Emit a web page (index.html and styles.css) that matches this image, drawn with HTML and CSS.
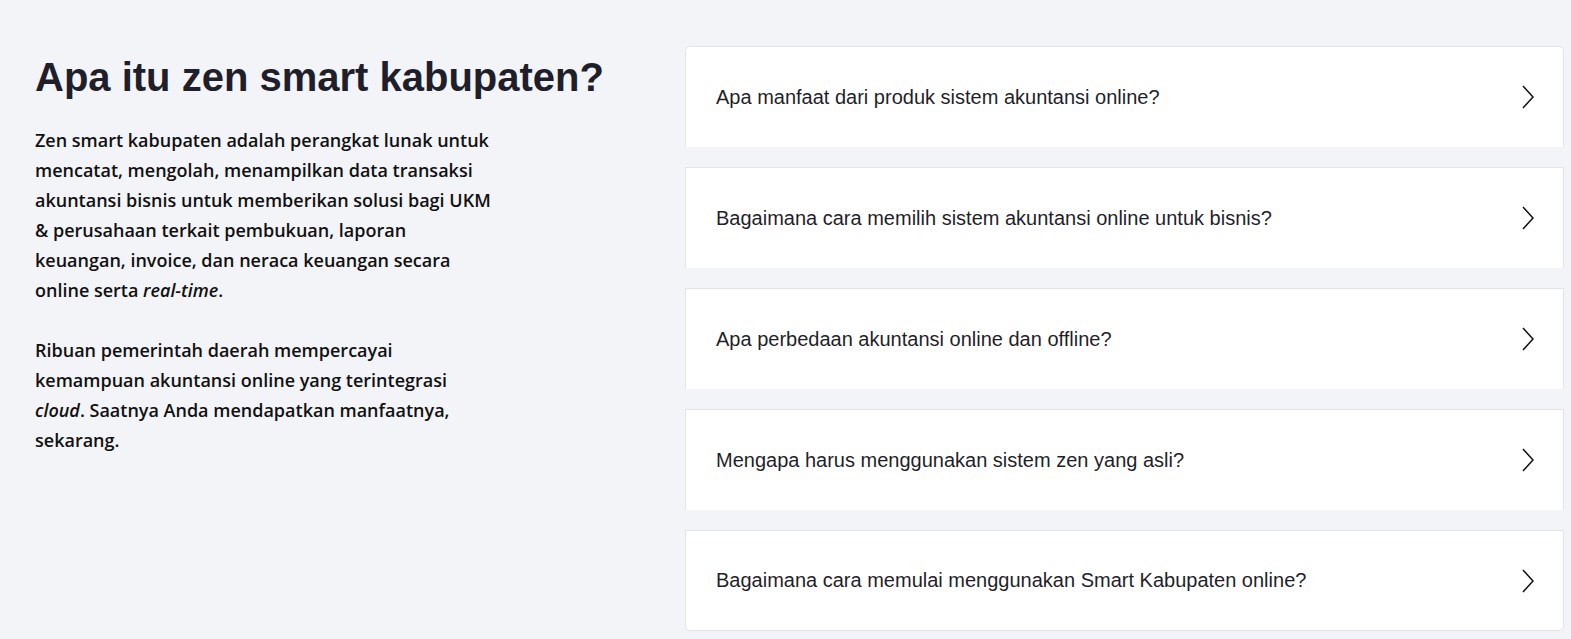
FILE: index.html
```html
<!DOCTYPE html>
<html lang="id">
<head>
<meta charset="utf-8">
<title>Apa itu zen smart kabupaten?</title>
<link rel="stylesheet" href="styles.css">
</head>
<body>
<main class="faq">
  <section class="intro">
    <h1 class="intro-title">Apa itu zen smart kabupaten?</h1>
    <p class="intro-text">Zen smart kabupaten adalah perangkat lunak untuk mencatat, mengolah, menampilkan data transaksi akuntansi bisnis untuk memberikan solusi bagi UKM &amp; perusahaan terkait pembukuan, laporan keuangan, invoice, dan neraca keuangan secara online serta <em>real-time</em>.</p>
    <p class="intro-text">Ribuan pemerintah daerah mempercayai kemampuan akuntansi online yang terintegrasi <em>cloud</em>. Saatnya Anda mendapatkan manfaatnya, sekarang.</p>
  </section>
  <section class="questions">
    <div class="question first">
      <span class="question-text">Apa manfaat dari produk sistem akuntansi online?</span>
      <svg class="chevron" viewBox="0 0 12 24" width="12" height="24"><path d="M1 1 L11 12 L1 23" /></svg>
    </div>
    <div class="question">
      <span class="question-text">Bagaimana cara memilih sistem akuntansi online untuk bisnis?</span>
      <svg class="chevron" viewBox="0 0 12 24" width="12" height="24"><path d="M1 1 L11 12 L1 23" /></svg>
    </div>
    <div class="question">
      <span class="question-text">Apa perbedaan akuntansi online dan offline?</span>
      <svg class="chevron" viewBox="0 0 12 24" width="12" height="24"><path d="M1 1 L11 12 L1 23" /></svg>
    </div>
    <div class="question">
      <span class="question-text">Mengapa harus menggunakan sistem zen yang asli?</span>
      <svg class="chevron" viewBox="0 0 12 24" width="12" height="24"><path d="M1 1 L11 12 L1 23" /></svg>
    </div>
    <div class="question last">
      <span class="question-text">Bagaimana cara memulai menggunakan Smart Kabupaten online?</span>
      <svg class="chevron" viewBox="0 0 12 24" width="12" height="24"><path d="M1 1 L11 12 L1 23" /></svg>
    </div>
  </section>
</main>
</body>
</html>
```
FILE: styles.css
```css
html, body {
  margin: 0;
  padding: 0;
  background: #f3f4f7;
}

.faq {
  display: grid;
  grid-template-columns: 650px 1fr;
  padding: 46px 7px 0 35px;
  box-sizing: border-box;
  width: 1571px;
}

.intro-title {
  margin: 7px 0 0 0;
  font-family: "Liberation Sans", Arial, sans-serif;
  font-weight: 700;
  font-size: 40px;
  line-height: 48px;
  color: #1f1f2b;
  white-space: nowrap;
}

.intro-text {
  margin: 24px 0 0 0;
  font-family: "Open Sans", sans-serif;
  font-weight: 600;
  font-size: 18px;
  line-height: 30px;
  color: #111111;
  max-width: 462px;
}

.intro-text + .intro-text {
  margin-top: 30px;
}

.questions {
  display: flex;
  flex-direction: column;
  gap: 20px;
}

.question {
  display: flex;
  align-items: center;
  justify-content: space-between;
  height: 101px;
  box-sizing: border-box;
  padding: 0 29px 0 30px;
  background: #ffffff;
  border: 1px solid #e3e4e8;
  border-bottom: none;
}

.question.first {
  border-radius: 5px 5px 0 0;
}

.question.last {
  border-bottom: 1px solid #e3e4e8;
  border-radius: 0 0 5px 5px;
}

.question-text {
  font-family: "Liberation Sans", Arial, sans-serif;
  font-size: 20px;
  color: #1f1f2b;
}

.chevron {
  fill: none;
  stroke: #111111;
  stroke-width: 1.5;
}
```
